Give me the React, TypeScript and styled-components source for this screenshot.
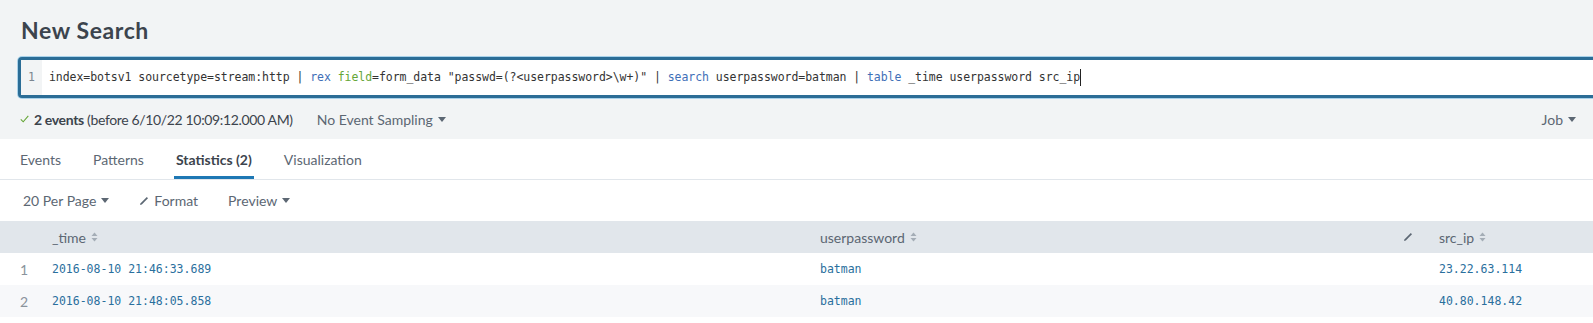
import React from 'react';
import styled, { createGlobalStyle } from 'styled-components';

const GlobalStyle = createGlobalStyle`
    html, body {
        margin: 0;
        padding: 0;
        background: #ffffff;
        overflow: hidden;
    }
    body {
        font-family: Lato, "Liberation Sans", sans-serif;
        color: #3c444d;
    }
`

const MONO = `"DejaVu Sans Mono", "Liberation Mono", monospace`

const Page = styled.div`
    width: 1593px;
    height: 323px;
    overflow: hidden;
`

const Top = styled.div`
    background: #f2f4f5;
    padding-top: 15px;
`

const Title = styled.h1`
    margin: 0 0 0 21px;
    height: 30px;
    line-height: 30px;
    font-size: 23px;
    font-weight: 700;
    letter-spacing: 0.6px;
    color: #3c444d;
`

const SearchBox = styled.div`
    margin: 12px -20px 0 18px;
    height: 35px;
    display: flex;
    background: #fff;
    border: 3px solid #2b6d96;
    border-radius: 4px;
    box-shadow: 0 0 0 1px #a9d2ea;
`

const Gutter = styled.div`
    width: 21px;
    background: #f2f4f5;
    color: #7b858f;
    font-family: ${MONO};
    font-size: 11.5px;
    line-height: 35px;
    text-align: center;
`

const Code = styled.div`
    padding-left: 7px;
    font-family: ${MONO};
    font-size: 11.5px;
    letter-spacing: -0.05px;
    line-height: 35px;
    color: #333;
    white-space: pre;
`

const Tok = styled.span<{ $kind: 'cmd' | 'arg' }>`
    color: ${p => (p.$kind === 'cmd' ? '#3f6fb8' : '#65a637')};
`

const Cursor = styled.span`
    display: inline-block;
    width: 1px;
    height: 17px;
    background: #222;
    vertical-align: middle;
`

const Status = styled.div`
    height: 40px;
    margin-top: 1px;
    padding: 0 17px 0 20px;
    display: flex;
    align-items: center;
    font-size: 14px;
    color: #3c444d;
`

const Events = styled.span`
    display: flex;
    align-items: center;
    gap: 5px;
    letter-spacing: -0.35px;
    b {
        font-weight: 700;
    }
`

const Dropdown = styled.span<{ $color?: string }>`
    display: inline-flex;
    align-items: center;
    gap: 5px;
    color: ${p => p.$color || '#5c6773'};
    cursor: pointer;
`

const Sampling = styled(Dropdown)`
    margin-left: 24px;
`

const Spacer = styled.div`
    flex: 1;
`

const Caret = styled.span`
    width: 0;
    height: 0;
    border-left: 4px solid transparent;
    border-right: 4px solid transparent;
    border-top: 5px solid currentColor;
`

const Tabs = styled.div`
    height: 40px;
    padding-left: 18px;
    display: flex;
    gap: 28px;
    border-bottom: 1px solid #e1e6eb;
`

const Tab = styled.div<{ $active?: boolean }>`
    padding: 0 2px;
    display: flex;
    align-items: center;
    font-size: 14px;
    font-weight: ${p => (p.$active ? 700 : 400)};
    color: ${p => (p.$active ? '#3c444d' : '#5c6773')};
    border-bottom: 3px solid ${p => (p.$active ? '#1e78b4' : 'transparent')};
    padding-top: 3px;
`

const Toolbar = styled.div`
    height: 41px;
    padding-left: 23px;
    display: flex;
    align-items: center;
    gap: 30px;
    font-size: 14px;
`

const Table = styled.div`
    display: grid;
    grid-template-columns: 40px 768px 619px 1fr;
`

const HeadCell = styled.div`
    height: 32px;
    background: #e1e6eb;
    padding: 0 14px 0 12px;
    display: flex;
    align-items: center;
    justify-content: space-between;
    font-size: 14px;
    color: #5c6773;
`

const HeadLabel = styled.span`
    display: flex;
    align-items: center;
    gap: 5px;
`

const Cell = styled.div<{ $alt?: boolean; $num?: boolean }>`
    height: 32px;
    background: ${p => (p.$alt ? '#f7f8fa' : '#ffffff')};
    padding-left: ${p => (p.$num ? '20px' : '12px')};
    display: flex;
    align-items: center;
    font-family: ${p => (p.$num ? 'Lato, sans-serif' : MONO)};
    font-size: ${p => (p.$num ? '14px' : '11.5px')};
    color: ${p => (p.$num ? '#8a939c' : '#2a6f9d')};
`

const Check = () => (
    <svg width="9" height="8" viewBox="0 0 9 8">
        <polyline points="0.8,4.3 3.2,6.8 8.3,0.8" fill="none" stroke="#65a637" strokeWidth="1.1" />
    </svg>
)

const Pencil = ({ color = '#5c6773' }: { color?: string }) => (
    <svg width="10" height="10" viewBox="0 0 10 10">
        <path d="M1 9 L1.6 7.2 L7.8 1 L9 2.2 L2.8 8.4 Z" fill={color} />
    </svg>
)

const Sort = () => (
    <svg width="7" height="10" viewBox="0 0 7 10">
        <path d="M3.5 0.5 L6.5 4 L0.5 4 Z" fill="#a4adb6" />
        <path d="M3.5 9.5 L6.5 6 L0.5 6 Z" fill="#a4adb6" />
    </svg>
)

const rows = [
    { time: '2016-08-10 21:46:33.689', pw: 'batman', ip: '23.22.63.114' },
    { time: '2016-08-10 21:48:05.858', pw: 'batman', ip: '40.80.148.42' },
]

const App = () => {
    return (
        <Page>
            <GlobalStyle />
            <Top>
                <Title>New Search</Title>
                <SearchBox>
                    <Gutter>1</Gutter>
                    <Code>
                        index=botsv1 sourcetype=stream:http | <Tok $kind='cmd'>rex</Tok> <Tok $kind='arg'>field</Tok>=form_data "passwd=(?&lt;userpassword&gt;\w+)" | <Tok $kind='cmd'>search</Tok> userpassword=batman | <Tok $kind='cmd'>table</Tok> _time userpassword src_ip<Cursor />
                    </Code>
                </SearchBox>
                <Status>
                    <Events>
                        <Check />
                        <span><b>2 events</b> (before 6/10/22 10:09:12.000 AM)</span>
                    </Events>
                    <Sampling>No Event Sampling <Caret /></Sampling>
                    <Spacer />
                    <Dropdown>Job <Caret /></Dropdown>
                </Status>
            </Top>
            <Tabs>
                <Tab>Events</Tab>
                <Tab>Patterns</Tab>
                <Tab $active>Statistics (2)</Tab>
                <Tab>Visualization</Tab>
            </Tabs>
            <Toolbar>
                <Dropdown>20 Per Page <Caret /></Dropdown>
                <Dropdown><Pencil /> Format</Dropdown>
                <Dropdown>Preview <Caret /></Dropdown>
            </Toolbar>
            <Table>
                <HeadCell />
                <HeadCell><HeadLabel>_time <Sort /></HeadLabel></HeadCell>
                <HeadCell><HeadLabel>userpassword <Sort /></HeadLabel><Pencil /></HeadCell>
                <HeadCell><HeadLabel>src_ip <Sort /></HeadLabel></HeadCell>
                {rows.map((r, i) => (
                    <React.Fragment key={i}>
                        <Cell $num $alt={i % 2 === 1}>{i + 1}</Cell>
                        <Cell $alt={i % 2 === 1}>{r.time}</Cell>
                        <Cell $alt={i % 2 === 1}>{r.pw}</Cell>
                        <Cell $alt={i % 2 === 1}>{r.ip}</Cell>
                    </React.Fragment>
                ))}
            </Table>
        </Page>
    );
};

export default App;
